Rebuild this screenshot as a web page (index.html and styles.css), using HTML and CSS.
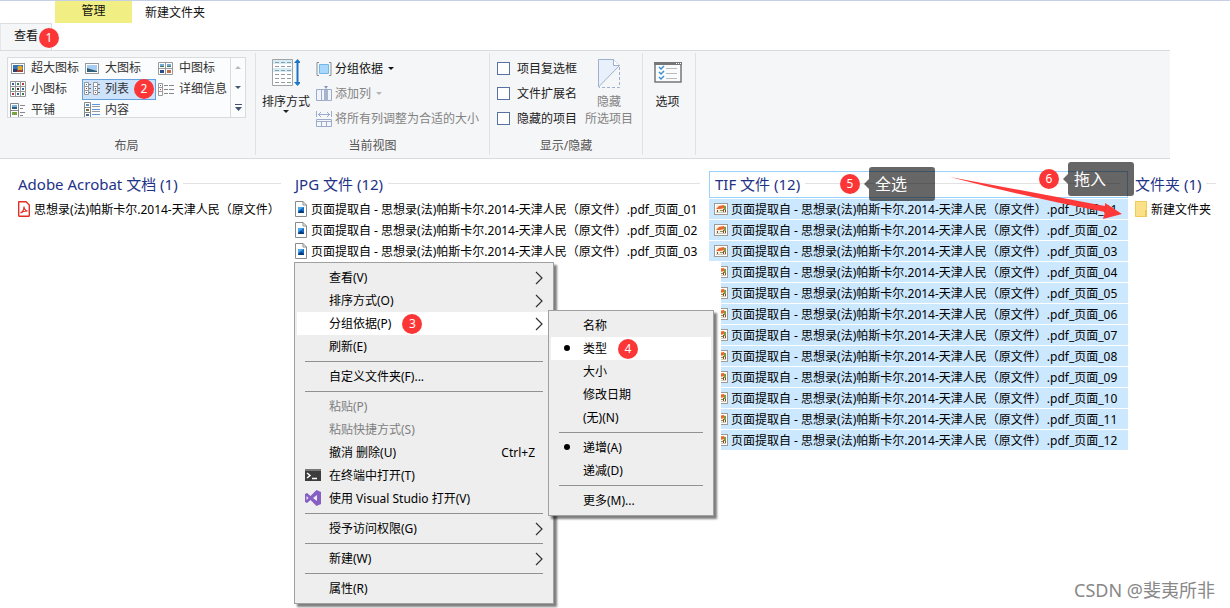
FILE: index.html
```html
<!DOCTYPE html>
<html lang="zh-CN">
<head>
<meta charset="utf-8">
<title>新建文件夹</title>
<link rel="stylesheet" href="styles.css">
</head>
<body>
<svg class="defs" aria-hidden="true">
  <symbol id="jpg" viewBox="0 0 12 16"><path d="M.5.5h7.5l3.5 3.5v11.500H.5z" fill="#fff" stroke="#8a8a8a"/><path d="M8 .5V4h3.500" fill="none" stroke="#8a8a8a"/><rect x="3" y="6" width="6" height="6" fill="#1769c0"/><path d="M3 6h6L3 10z" fill="#4ba7ea"/><path d="M3 12l3-3 3 2v1z" fill="#083a72"/></symbol>
  <symbol id="tif" viewBox="0 0 14 12"><rect x=".5" y=".5" width="13" height="11" fill="#fff" stroke="#a09a94"/><path d="M2 2h10v8H2z" fill="#f6efe6"/><path d="M2 6l3-3 5-1 1 3-5 1z" fill="#e8672a"/><path d="M10 3h2v4h-2zM6 7h3v1H6z" fill="#7b9b46"/><path d="M3 7h1v2H3zM9 6h1v3H9zM11 7h1v2h-1z" fill="#8a4a38"/><path d="M2 9h10v1H2z" fill="#c8ccb4"/></symbol>
  <symbol id="more" viewBox="0 0 8 14"><path d="M1 1l6 6-6 6" fill="none" stroke="#333" stroke-width="1.200"/></symbol>
  <symbol id="down" viewBox="0 0 6 3"><path d="M0 0h6L3 3z" fill="currentColor"/></symbol>
</svg>

<header class="titlebar">
  <button class="tab-manage">管理</button>
  <span class="window-title">新建文件夹</span>
</header>
<nav class="tabs"><button class="tab-view">查看</button><span class="badge badge-tab">1</span></nav>

<section class="ribbon">
  <div class="group layout">
    <div class="gallery">
      <div class="views">
        <button class="view"><svg viewBox="0 0 16 16"><rect x="1.500" y="3.500" width="13" height="10" fill="#fff" stroke="#999"/><path d="M3 5h10v7H3z" fill="#3571bc"/><path d="M3 9h4v3H3z" fill="#29406f"/><circle cx="10" cy="8" r="2.500" fill="#e4a824"/><path d="M7 10h6v2H7z" fill="#a64432"/></svg>超大图标</button>
        <button class="view"><svg viewBox="0 0 16 16"><rect x="1.500" y="3.500" width="13" height="10" fill="#fff" stroke="#999"/><path d="M3 5h10v7H3z" fill="#a5cef2"/><path d="M3 8l3 1 7 2v1H3z" fill="#315f78"/></svg>大图标</button>
        <button class="view"><svg viewBox="0 0 16 16"><path d="M.5 2.500h14v12h-14zM7.500 2.500v12M.5 8.500h14" fill="#fff" stroke="#999"/><path d="M2 4h4v2H2zM9 4h4v2H9z" fill="#75a9d8"/><path d="M2 6h4v1H2zM9 6h4v1H9z" fill="#3b7660"/><path d="M2 10h4v3H2z" fill="#2b4b8a"/><path d="M9 10h4v3H9z" fill="#c56b45"/></svg>中图标</button>
        <button class="view"><svg viewBox="0 0 16 16"><path d="M.5.500h15v15H.5zM5.500.500v15M10.500.500v15M.5 5.500h15M.5 10.500h15" fill="#fff" stroke="#999"/><path d="M2 2h2v2H2zM12 7h2v2h-2zM7 12h2v2H7z" fill="#2d66a5"/><path d="M12 2h2v2h-2zM2 12h2v2H2z" fill="#b13b32"/><path d="M7 2h2v2H7zM2 7h2v2H2zM12 12h2v2h-2z" fill="#39784a"/><path d="M7 7h2v2H7z" fill="#333"/></svg>小图标</button>
        <button class="view selected"><svg viewBox="0 0 16 16"><path d="M.5 1.500h4v12h-4zM.5 5.500h4M.5 9.500h4M9.500 1.500h4v12h-4zM9.500 5.500h4M9.500 9.500h4" fill="#fff" stroke="#999"/><path d="M2 3h1v1H2zM11 7h1v1h-1zM2 11h1v1H2z" fill="#2d66a5"/><path d="M2 7h1v1H2zM11 11h1v1h-1z" fill="#b13b32"/><path d="M5 3.500h2M5 7.500h2M5 11.500h2M14 3.500h2M14 7.500h2M14 11.500h2" stroke="#777"/></svg>列表<span class="badge badge-list">2</span></button>
        <button class="view"><svg viewBox="0 0 16 16"><path d="M.5 2.500h4v12h-4zM.5 6.500h4M.5 10.500h4" fill="#fff" stroke="#999"/><path d="M2 4h1v1H2z" fill="#2d66a5"/><path d="M2 8h1v1H2z" fill="#b13b32"/><path d="M6 4.500h4M11 4.500h5M6 8.500h4M11 8.500h5M6 12.500h4M11 12.500h5" stroke="#888"/></svg>详细信息</button>
        <button class="view"><svg viewBox="0 0 16 16"><path d="M.5 1.500h8v14h-8zM.5 8.500h8" fill="#fff" stroke="#888"/><path d="M2 3h5v4H2z" fill="#75b2e4"/><path d="M2 5h5v2H2z" fill="#2f617b"/><path d="M2 10h5v3H2z" fill="#78a33d"/><path d="M10 3.500h5M10 6.500h3M10 10.500h5M10 13.500h3" stroke="#888"/></svg>平铺</button>
        <button class="view"><svg viewBox="0 0 16 16"><path d="M.5.500h6v15h-6zM.5 5.500h6M.5 10.500h6" fill="#fff" stroke="#888"/><path d="M2 2h3v2H2z" fill="#5b91bd"/><path d="M2 7h3v2H2z" fill="#746d3c"/><path d="M2 12h3v2H2z" fill="#3d6b9d"/><path d="M8 2.500h8M8 7.500h8M8 12.500h8" stroke="#5d95da"/><path d="M8 4.500h8M8 9.500h8" stroke="#999"/></svg>内容</button>
      </div>
      <div class="scroll">
        <button aria-label="向上"><svg class="caret up"><use href="#down"/></svg></button>
        <button aria-label="向下"><svg class="caret"><use href="#down"/></svg></button>
        <button aria-label="更多"><svg class="caret-more" viewBox="0 0 7 7"><path d="M0 .5h7" stroke="currentColor"/><path d="M0 3h7L3.500 7z" fill="currentColor"/></svg></button>
      </div>
    </div>
    <div class="group-label">布局</div>
  </div>

  <div class="group current">
    <div class="group-body">
      <button class="big"><svg class="big-icon" viewBox="0 0 28 28"><path d="M.5.500h20v26H.5z" fill="#fff" stroke="#a3a3a3"/><path d="M1 1h19v4H1zM1 9h19v4H1z" fill="#d6ecf6"/><path d="M3 3.500h16M3 7.500h16M3 11.500h16M3 15.500h16M3 19.500h16M3 23.500h16" stroke="#8e9ba2" stroke-dasharray="4 2"/><path d="M25.500 2v23" stroke="#1d76c4" stroke-width="2"/><path d="M22 4l3.500-4L29 4zM22 23l3.500 4 3.500-4z" fill="#1d76c4"/></svg><span>排序方式</span><svg class="caret"><use href="#down"/></svg></button>
      <div class="stack">
        <button class="small"><svg class="icon" viewBox="0 0 16 16"><path d="M3 1.500H1v13h2M13 1.500h2v13h-2" fill="none" stroke="#8d8d8d"/><path d="M3.500 3.500h9v9h-9z" fill="#a7d8fb" stroke="#70b6e8"/></svg>分组依据<svg class="caret"><use href="#down"/></svg></button>
        <button class="small" disabled><svg class="icon" viewBox="0 0 16 16"><path d="M.5 3.500h15v11H.5zM5.500 3.500v11M10.500 3.500v11" fill="#f1f4fa" stroke="#9cabc9"/><path d="M8 4h4v11H8z" fill="#a6b3cd"/><path d="M8 0h4l-2 3z" fill="#8796b5"/></svg>添加列<svg class="caret"><use href="#down"/></svg></button>
        <button class="small" disabled><svg class="icon" viewBox="0 0 16 16"><path d="M.5 0v6M15.500 0v6M2 3.500h12M5 1L2.500 3.500 5 6M11 1l2.500 2.500L11 6M.5 8.500h15v7H.5zM.5 10.500h15M5.500 11v4M10.500 11v4" fill="none" stroke="#9cabc9"/></svg>将所有列调整为合适的大小</button>
      </div>
    </div>
    <div class="group-label">当前视图</div>
  </div>

  <div class="group show">
    <div class="group-body">
      <div class="stack">
        <label class="check"><input type="checkbox">项目复选框</label>
        <label class="check"><input type="checkbox">文件扩展名</label>
        <label class="check"><input type="checkbox">隐藏的项目</label>
      </div>
      <button class="big hide" disabled><svg class="hide-icon" viewBox="0 0 22 29"><path d="M.5 28V.5h15l6 6z" fill="#e8f1fb"/><path d="M.5 28V.5h15l6 6L.5 28" fill="none" stroke="#9fb0ce"/><path d="M15.500.500v6h6" fill="#fff" stroke="#9fb0ce"/><path d="M21.500 8v20.500H1" fill="none" stroke="#9fb0ce" stroke-dasharray="3 2"/></svg><span>隐藏</span><span>所选项目</span></button>
    </div>
    <div class="group-label">显示/隐藏</div>
  </div>

  <div class="group options">
    <button class="big"><svg class="big-icon" viewBox="0 0 28 28"><path d="M1 4h26v19H1z" fill="#fafbfc" stroke="#777" stroke-width="1.500"/><path d="M0 3h28v3H0z" fill="#777"/><path d="M22 4.500h1M24 4.500h1M26 4.500h1" stroke="#fff"/><path d="M5 8l2 2 3-3M5 13l2 2 3-3M5 18l2 2 3-3" fill="none" stroke="#3c91d6" stroke-width="1.500"/><path d="M12 9.500h11M12 14.500h11M12 19.500h11" stroke="#bbb"/></svg><span>选项</span></button>
  </div>
</section>

<main class="files">
  <section class="column">
    <h2>Adobe Acrobat 文档 (1)</h2>
    <ul><li><svg class="page-icon" viewBox="0 0 12 16"><path d="M1 .7h7l3.300 3.300v10.500q0 .8-.8.8H1.500q-.8 0-.8-.8V1z" fill="#fff" stroke="#e22f25" stroke-width="1.400"/><path d="M2.500 12c2-1 3.500-4 3.500-6.500 0 2.500 1.500 4 3.500 4.500-2 0-5 .5-7 2z" fill="none" stroke="#e22f25" stroke-width="1.200"/></svg><span>思想录(法)帕斯卡尔.2014-天津人民（原文件）</span></li></ul>
  </section>
  <section class="column">
    <h2>JPG 文件 (12)</h2>
    <ul>
      <li><svg class="page-icon"><use href="#jpg"/></svg><span>页面提取自 - 思想录(法)帕斯卡尔.2014-天津人民（原文件）.pdf_页面_01</span></li>
      <li><svg class="page-icon"><use href="#jpg"/></svg><span>页面提取自 - 思想录(法)帕斯卡尔.2014-天津人民（原文件）.pdf_页面_02</span></li>
      <li><svg class="page-icon"><use href="#jpg"/></svg><span>页面提取自 - 思想录(法)帕斯卡尔.2014-天津人民（原文件）.pdf_页面_03</span></li>
    </ul>
  </section>
  <section class="column chosen">
    <h2>TIF 文件 (12)</h2>
    <ul>
      <li><svg class="tif-icon"><use href="#tif"/></svg><span>页面提取自 - 思想录(法)帕斯卡尔.2014-天津人民（原文件）.pdf_页面_01</span></li>
      <li><svg class="tif-icon"><use href="#tif"/></svg><span>页面提取自 - 思想录(法)帕斯卡尔.2014-天津人民（原文件）.pdf_页面_02</span></li>
      <li><svg class="tif-icon"><use href="#tif"/></svg><span>页面提取自 - 思想录(法)帕斯卡尔.2014-天津人民（原文件）.pdf_页面_03</span></li>
      <li class="cut"><svg class="tif-icon"><use href="#tif"/></svg><span>页面提取自 - 思想录(法)帕斯卡尔.2014-天津人民（原文件）.pdf_页面_04</span></li>
      <li class="cut"><svg class="tif-icon"><use href="#tif"/></svg><span>页面提取自 - 思想录(法)帕斯卡尔.2014-天津人民（原文件）.pdf_页面_05</span></li>
      <li class="cut"><svg class="tif-icon"><use href="#tif"/></svg><span>页面提取自 - 思想录(法)帕斯卡尔.2014-天津人民（原文件）.pdf_页面_06</span></li>
      <li class="cut"><svg class="tif-icon"><use href="#tif"/></svg><span>页面提取自 - 思想录(法)帕斯卡尔.2014-天津人民（原文件）.pdf_页面_07</span></li>
      <li class="cut"><svg class="tif-icon"><use href="#tif"/></svg><span>页面提取自 - 思想录(法)帕斯卡尔.2014-天津人民（原文件）.pdf_页面_08</span></li>
      <li class="cut"><svg class="tif-icon"><use href="#tif"/></svg><span>页面提取自 - 思想录(法)帕斯卡尔.2014-天津人民（原文件）.pdf_页面_09</span></li>
      <li class="cut"><svg class="tif-icon"><use href="#tif"/></svg><span>页面提取自 - 思想录(法)帕斯卡尔.2014-天津人民（原文件）.pdf_页面_10</span></li>
      <li class="cut"><svg class="tif-icon"><use href="#tif"/></svg><span>页面提取自 - 思想录(法)帕斯卡尔.2014-天津人民（原文件）.pdf_页面_11</span></li>
      <li class="cut"><svg class="tif-icon"><use href="#tif"/></svg><span>页面提取自 - 思想录(法)帕斯卡尔.2014-天津人民（原文件）.pdf_页面_12</span></li>
    </ul>
  </section>
  <section class="column folders">
    <h2>文件夹 (1)</h2>
    <ul><li><svg class="page-icon" viewBox="0 0 12 16"><path d="M0 0h12v16H0z" fill="#fbe08a"/><path d="M.5.500h11v8h1v7H.5z" fill="none" stroke="#f0cb55"/><path d="M10 9h2v7h-2z" fill="#efc84f"/></svg><span>新建文件夹</span></li></ul>
  </section>
</main>

<svg class="arrow" viewBox="0 0 174 44" aria-hidden="true"><path d="M1 1l155 29V27l17 11-19 5 2-7q-75-14-155-35z" fill="#ff3838"/></svg>
<div class="callout select-all"><span class="badge">5</span><span class="tip">全选</span></div>
<div class="callout drag-in"><span class="badge">6</span><span class="tip">拖入</span></div>

<div class="menu context" role="menu">
  <button class="item">查看(V)<svg class="more"><use href="#more"/></svg></button>
  <button class="item">排序方式(O)<svg class="more"><use href="#more"/></svg></button>
  <button class="item active">分组依据(P)<span class="badge">3</span><svg class="more"><use href="#more"/></svg></button>
  <button class="item">刷新(E)</button>
  <hr>
  <button class="item">自定义文件夹(F)...</button>
  <hr>
  <button class="item" disabled>粘贴(P)</button>
  <button class="item" disabled>粘贴快捷方式(S)</button>
  <button class="item">撤消 删除(U)<span class="shortcut">Ctrl+Z</span></button>
  <button class="item"><svg class="mark" viewBox="0 0 16 16"><path d="M0 2h16v12H0z" fill="#3c3c3c"/><path d="M0 2h16v2H0z" fill="#777"/><path d="M2 6l3 2.500L2 11M7 11.500h5" fill="none" stroke="#fff" stroke-width="1.500"/></svg>在终端中打开(T)</button>
  <button class="item"><svg class="mark" viewBox="0 0 16 16"><path d="M11.500 0L16 2v12l-4.500 2L5.500 10 2 13 0 12V4l2-1 3.500 3zM12 5L8 8l4 3zM1.500 6v4l2-2z" fill="#865fc5" fill-rule="evenodd"/></svg>使用 Visual Studio 打开(V)</button>
  <hr>
  <button class="item">授予访问权限(G)<svg class="more"><use href="#more"/></svg></button>
  <hr>
  <button class="item">新建(W)<svg class="more"><use href="#more"/></svg></button>
  <hr>
  <button class="item">属性(R)</button>
</div>

<div class="menu submenu" role="menu">
  <button class="item">名称</button>
  <button class="item active"><span class="dot"></span>类型<span class="badge">4</span></button>
  <button class="item">大小</button>
  <button class="item">修改日期</button>
  <button class="item">(无)(N)</button>
  <hr>
  <button class="item"><span class="dot"></span>递增(A)</button>
  <button class="item">递减(D)</button>
  <hr>
  <button class="item">更多(M)...</button>
</div>

<footer class="watermark">CSDN @斐夷所非</footer>
</body>
</html>
```
FILE: styles.css
```css
* { box-sizing: border-box; }
body {
  margin: 0;
  min-height: 100vh;
  position: relative;
  overflow: hidden;
  background: #fff;
  color: #111;
  font: 12px/20px "Noto Sans", "Noto Sans CJK SC", sans-serif;
}
button { border: 0; padding: 0; margin: 0; background: none; color: inherit; font: inherit; text-align: left; white-space: nowrap; }
button:disabled { color: #838383; }
svg { display: block; flex: none; }
.defs { position: absolute; width: 0; height: 0; }

.badge {
  display: block; flex: none; width: 20px; height: 20px; border-radius: 50%;
  background: #fc3636; color: #fff; font-size: 12px; line-height: 20px; text-align: center;
}

.titlebar { display: flex; align-items: flex-start; height: 23px; padding-left: 55px; border-top: 1px solid #c5cfe5; }
.tab-manage { width: 77px; height: 22px; padding-bottom: 2px; background: #f1ee83; text-align: center; }
.window-title { margin-left: 13px; line-height: 24px; }
.tabs { display: flex; position: relative; }
.tab-view { width: 52px; height: 27px; padding: 0 0 2px 13px; background: #f5f6f7; border: 1px solid #dcdddf; border-bottom: 0; border-left-color: #e6e7e8; }
.badge-tab { position: absolute; left: 39px; top: 5px; }

.ribbon { display: flex; height: 109px; margin-right: 60px; padding: 2px 0 3px; background: #f5f6f7; border: solid #dadbdc; border-width: 1px 0; }
.group { display: flex; flex-direction: column; justify-content: space-between; border-right: 1px solid #e1e2e4; }
.group-body { display: flex; padding-top: 3px; }
.group-label { color: #555; text-align: center; line-height: 18px; }
.layout { width: 256px; padding: 4px 9px 0 7px; }
.gallery { display: flex; height: 61px; border: 1px solid #dadbdc; background: #fbfcfd; overflow: hidden; }
.views { display: grid; flex: 1; grid-template-columns: repeat(3, 74px); grid-auto-rows: 21px; }
.view { display: flex; align-items: center; gap: 5px; padding: 0 0 2px 2px; position: relative; color: #333; }
.view svg { width: 16px; height: 16px; }
.view.selected { padding-left: 1px; background: #cde3fb; border: 1px solid #64a0de; }
.badge-list { position: absolute; right: 1px; top: -1px; }
.scroll { display: grid; width: 15px; grid-template-rows: repeat(3, 1fr); border-left: 1px solid #dadbdc; }
.scroll button { display: grid; place-items: center; color: #44546f; }
.caret { width: 6px; height: 3px; }
.caret.up { transform: rotate(180deg); color: #b4b9c2; }
.caret-more { width: 7px; height: 7px; }
.current { width: 234px; }
.current .group-body { gap: 6px; padding-left: 6px; }
.big { display: flex; flex-direction: column; align-items: center; line-height: 17px; color: #222; }
.big-icon { width: 28px; height: 28px; margin: 3px 0 6px; }
.hide-icon { width: 22px; height: 29px; margin: 3px 0 5px; }
.stack { display: flex; flex-direction: column; }
.small { display: flex; align-items: center; height: 25px; gap: 3px; }
.small .icon { width: 16px; height: 16px; }
.small .caret { margin-left: 2px; }
.small:disabled .caret { color: #b5b5b5; }
.show { width: 153px; }
.show .group-body { gap: 8px; padding-left: 7px; }
.check { display: flex; align-items: center; height: 25px; gap: 7px; color: #222; }
.check input { appearance: none; width: 13px; height: 13px; margin: 0; border: 1px solid #5672a3; background: #fff; }
.options { width: 53px; padding: 3px 3px 0 0; justify-content: flex-start; }

.files { display: grid; grid-template-columns: 277px 414px 419px 1fr; padding: 12px 0 0 18px; }
.column { min-width: 0; padding-right: 14px; }
h2 { display: flex; align-items: center; gap: 5px; height: 27px; margin: 0 0 1px; padding-bottom: 2px; color: #1e3287; font-size: 15px; font-weight: 400; white-space: nowrap; }
h2::after { content: ""; flex: 1; height: 1px; background: #e2e2e2; }
.column:nth-child(2) { padding-right: 9px; }
ul { list-style: none; margin: 0; padding: 0; }
li { display: flex; align-items: center; height: 20px; margin-bottom: 1px; gap: 4px; color: #000; white-space: nowrap; }
li span { padding-top: 2px; }
.page-icon { width: 12px; height: 16px; }
.tif-icon { width: 14px; height: 12px; }
.column.chosen { padding-right: 0; }
.chosen h2 { padding: 0 7px 2px 5px; border: 1px solid #99d1ff; }
.chosen li { padding-left: 5px; gap: 3px; background: #cce8ff; }
.chosen .cut { margin-left: 12px; padding-left: 0; overflow: hidden; }
.cut .tif-icon { margin-left: -7px; }
.column.folders { padding: 0 14px 0 7px; }

.arrow { position: absolute; left: 949px; top: 176px; width: 174px; height: 44px; }
.callout { position: absolute; display: flex; align-items: center; gap: 9px; }
.select-all { left: 840px; top: 167px; }
.drag-in { left: 1039px; top: 162px; }
.tip { position: relative; width: 66px; height: 34px; padding-left: 6px; border-radius: 3px; background: rgba(0, 0, 0, .6); color: #fff; font-size: 16px; line-height: 34px; }
.tip::before { content: ""; position: absolute; left: -5px; top: 12px; border: solid transparent; border-width: 5px 5px 5px 0; border-right-color: rgba(0, 0, 0, .6); }

.menu { position: absolute; padding: 3px 2px; border: 1px solid #a0a0a0; background: #eee; box-shadow: 3px 3px 2px rgba(0, 0, 0, .5); }
.context { left: 294px; top: 262px; width: 260px; }
.submenu { left: 548px; top: 310px; width: 166px; }
.item { display: flex; align-items: center; width: 100%; height: 23px; padding: 0 8px 0 32px; position: relative; color: #000; }
.item:disabled { color: #808080; }
.item.active { background: #fff; }
.item .badge { margin-left: 11px; }
.more { width: 8px; height: 14px; margin-left: auto; }
.shortcut { margin-left: auto; padding-right: 8px; }
.mark { position: absolute; left: 8px; top: 3px; width: 16px; height: 16px; }
.dot { position: absolute; left: 13px; top: 8px; width: 6px; height: 6px; border-radius: 50%; background: #000; }
hr { height: 1px; margin: 3px 8px; border: 0; background: #919191; }

.watermark { position: absolute; right: 15px; bottom: 6px; color: #888; font-size: 18px; line-height: 24px; }
```
